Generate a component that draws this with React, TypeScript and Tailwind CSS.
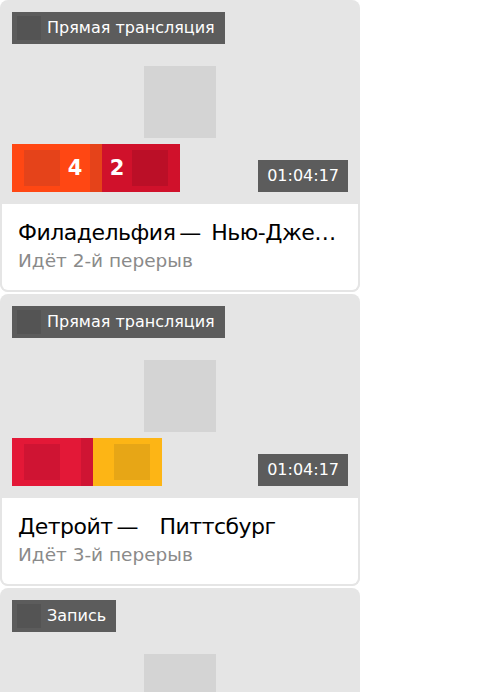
import React from "react";

type Team = {
  color: string;
  stripe: string;
  logo: string;
  score?: number;
};

type Match = {
  badge: string;
  time?: string;
  title?: string;
  status?: string;
  home?: Team;
  away?: Team;
};

const matches: Match[] = [
  {
    badge: "Прямая трансляция",
    time: "01:04:17",
    title: "Филадельфия\u2009—\u2002Нью-Джерси",
    status: "Идёт 2-й перерыв",
    home: { color: "bg-[#ff4713]", stripe: "bg-[#e5431a]", logo: "bg-[#e5431a]", score: 4 },
    away: { color: "bg-[#d0112b]", stripe: "", logo: "bg-[#bb0f27]", score: 2 },
  },
  {
    badge: "Прямая трансляция",
    time: "01:04:17",
    title: "Детройт\u2009—\u2003Питтсбург",
    status: "Идёт 3-й перерыв",
    home: { color: "bg-[#e31837]", stripe: "bg-[#cf1433]", logo: "bg-[#cf1433]" },
    away: { color: "bg-[#fdb515]", stripe: "", logo: "bg-[#e7a616]" },
  },
  {
    badge: "Запись",
  },
];

const Badge = ({ text }: { text: string }) => (
  <div className="flex h-8 items-center gap-[6px] self-start bg-[#5c5c5c] pl-[5px] pr-[10px]">
    <span className="h-6 w-6 bg-[#545454]" />
    <span className="text-[16px] leading-none text-white">{text}</span>
  </div>
);

const ScoreBar = ({ home, away }: { home: Team; away: Team }) => {
  const hasScore = home.score !== undefined;
  return (
    <div className="flex h-12">
      <div className={`flex items-center pl-3 ${home.color}`}>
        <span className={`h-9 w-9 ${home.logo}`} />
        <span
          className={`flex justify-center text-[21px] font-bold leading-none text-white ${
            hasScore ? "w-[30px]" : "w-[21px]"
          }`}
        >
          {home.score}
        </span>
      </div>
      <div className={`w-3 ${home.stripe}`} />
      <div className={`flex items-center pr-3 ${away.color}`}>
        <span
          className={`flex justify-center text-[21px] font-bold leading-none text-white ${
            hasScore ? "w-[30px]" : "w-[21px]"
          }`}
        >
          {away.score}
        </span>
        <span className={`h-9 w-9 ${away.logo}`} />
      </div>
    </div>
  );
};

const MatchCard = ({ match }: { match: Match }) => (
  <div className="mb-[2px] overflow-hidden rounded-lg bg-[#e5e5e5]">
    <div className="relative flex h-[204px] flex-col justify-between p-3">
      <span className="absolute left-[144px] top-[66px] h-[72px] w-[72px] bg-[#d4d4d4]" />
      <div className="relative flex">
        <Badge text={match.badge} />
      </div>
      {match.home && match.away && (
        <div className="relative flex items-end justify-between">
          <ScoreBar home={match.home} away={match.away} />
          <div className="flex h-8 items-center bg-[#5c5c5c] px-[9px] text-[16px] leading-none text-white">
            {match.time}
          </div>
        </div>
      )}
    </div>
    <div className="rounded-b-lg border-2 border-t-0 border-[#e5e5e5] bg-white px-4 pb-[17px] pt-[16px]">
      <div className="truncate text-[22px] leading-[26px] tracking-[-0.5px] text-black">{match.title}</div>
      <div className="mt-[3px] text-[18.5px] leading-[24px] text-[#8a8a8a]">{match.status}</div>
    </div>
  </div>
);

export default function App() {
  return (
    <div className="w-[360px] bg-white font-['DejaVu_Sans',sans-serif]">
      {matches.map((m, i) => (
        <MatchCard key={i} match={m} />
      ))}
    </div>
  );
}
